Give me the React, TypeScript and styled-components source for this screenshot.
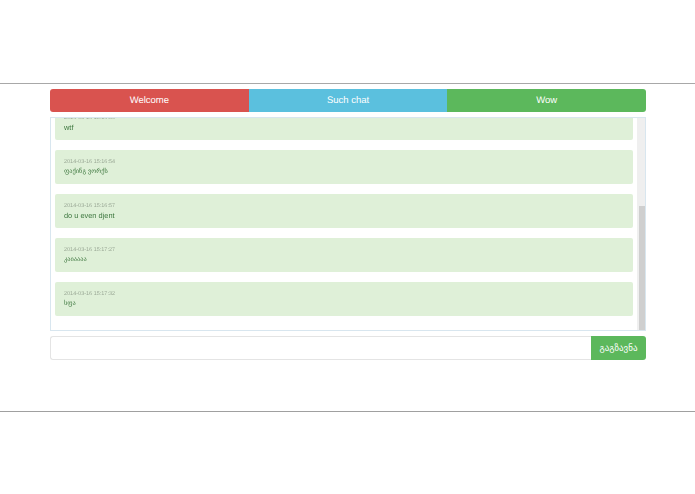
import styled, { createGlobalStyle } from 'styled-components';

const GlobalStyle = createGlobalStyle`
  html, body {
    margin: 0;
    background: #fff;
    font-family: 'Liberation Sans', 'DejaVu Sans', sans-serif;
    text-rendering: geometricPrecision;
  }
`;

const Page = styled.div`
  width: 695px;
  height: 494px;
  padding-top: 83px;
  box-sizing: border-box;
  overflow: hidden;
  filter: blur(0.35px);
`;

const Section = styled.div`
  height: 322px;
  border-top: 1px solid #a8a8a8;
  border-bottom: 1px solid #a0a0a0;
  padding: 5px 49px 0 50px;
`;

const Tabs = styled.div`
  display: flex;
  height: 23px;
  border-radius: 3px;
  overflow: hidden;
`;

const Tab = styled.div<{ $bg: string }>`
  flex: 1;
  display: flex;
  align-items: center;
  justify-content: center;
  background: ${({ $bg }) => $bg};
  color: #fff;
  font-size: 9.5px;
`;

const ChatBox = styled.div`
  display: flex;
  height: 214px;
  box-sizing: border-box;
  margin-top: 5px;
  border: 1px solid #d8e6ef;
`;

const MessageList = styled.div`
  flex: 1;
  min-width: 0;
  display: flex;
  flex-direction: column;
  justify-content: flex-end;
  gap: 10px;
  overflow: hidden;
  padding: 0 4px 14px 4px;
`;

const ScrollTrack = styled.div`
  width: 8px;
  box-sizing: border-box;
  padding-left: 2px;
  display: flex;
  flex-direction: column;
  justify-content: flex-end;
  background: #efefef;
`;

const ScrollThumb = styled.div`
  height: 124px;
  background: #cfcfcf;
`;

const Message = styled.div`
  flex: none;
  height: 34px;
  box-sizing: border-box;
  padding: 9px 8px 0 9px;
  background: #dff0d8;
  border-radius: 2px;
  color: #3c763d;
`;

const Stamp = styled.div`
  font-size: 5.5px;
  line-height: 7px;
  color: #9aa896;
`;

const Body = styled.div<{ $georgian?: boolean }>`
  font-size: ${({ $georgian }) => ($georgian ? '6.4px' : '7.4px')};
  line-height: 12px;
`;

const Form = styled.div`
  display: flex;
  height: 24px;
  margin-top: 5px;
`;

const Input = styled.input`
  flex: 1;
  min-width: 0;
  box-sizing: border-box;
  border: 1px solid #e4e4e4;
  border-right: none;
  border-radius: 3px 0 0 3px;
  outline: none;
`;

const SendButton = styled.button`
  width: 55px;
  border: none;
  padding: 0;
  background: #5cb85c;
  color: #fff;
  font-family: inherit;
  font-size: 9px;
  border-radius: 0 3px 3px 0;
`;

const tabs = [
  { label: 'Welcome', color: '#d9534f' },
  { label: 'Such chat', color: '#5bc0de' },
  { label: 'Wow', color: '#5cb85c' },
];

const messages = [
  { time: '2014-03-16 15:16:50', text: 'wtf' },
  { time: '2014-03-16 15:16:54', text: 'ფაქინგ ვორქს', georgian: true },
  { time: '2014-03-16 15:16:57', text: 'do u even djent' },
  { time: '2014-03-16 15:17:27', text: 'კაიაააა', georgian: true },
  { time: '2014-03-16 15:17:32', text: 'სფა', georgian: true },
];

const App = () => {
  return (
    <Page>
      <GlobalStyle />
      <Section>
        <Tabs>
          {tabs.map((tab) => (
            <Tab key={tab.label} $bg={tab.color}>
              {tab.label}
            </Tab>
          ))}
        </Tabs>
        <ChatBox>
          <MessageList>
            {messages.map((message) => (
              <Message key={message.time}>
                <Stamp>{message.time}</Stamp>
                <Body $georgian={message.georgian}>{message.text}</Body>
              </Message>
            ))}
          </MessageList>
          <ScrollTrack>
            <ScrollThumb />
          </ScrollTrack>
        </ChatBox>
        <Form>
          <Input />
          <SendButton>გაგზავნა</SendButton>
        </Form>
      </Section>
    </Page>
  );
};

export default App;
